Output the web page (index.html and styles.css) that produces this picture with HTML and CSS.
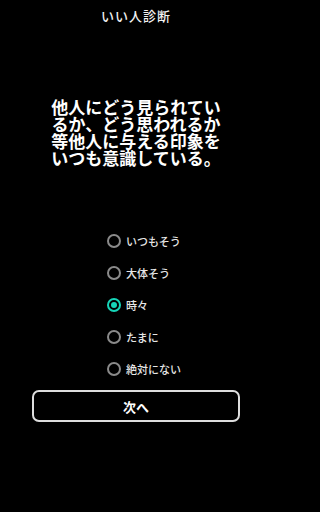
FILE: index.html
```html
<!DOCTYPE html>
<html lang="ja">
<head>
<meta charset="utf-8">
<link rel="stylesheet" href="styles.css">
</head>
<body>
<div class="app">
  <header class="title">いい人診断</header>
  <p class="question">他人にどう見られてい<br>るか、どう思われるか<br>等他人に与える印象を<br>いつも意識している。</p>
  <ul class="options">
    <li class="option"><span class="radio"></span><span class="label">いつもそう</span></li>
    <li class="option"><span class="radio"></span><span class="label">大体そう</span></li>
    <li class="option"><span class="radio checked"></span><span class="label">時々</span></li>
    <li class="option"><span class="radio"></span><span class="label">たまに</span></li>
    <li class="option"><span class="radio"></span><span class="label">絶対にない</span></li>
  </ul>
  <button class="next">次へ</button>
</div>
</body>
</html>
```
FILE: styles.css
```css
html, body {
  margin: 0;
  padding: 0;
  background: #000;
}
body {
  width: 272px;
  height: 512px;
  overflow: hidden;
  font-family: "Noto Sans CJK JP", "Noto Sans", sans-serif;
  color: #fff;
}
.app {
  display: flex;
  flex-direction: column;
}
.title {
  height: 32px;
  line-height: 32px;
  text-align: center;
  font-size: 13px;
  font-weight: 500;
  letter-spacing: 1px;
  color: #f2f2f2;
}
.question {
  margin: 66px 0 0 0;
  font-size: 17px;
  line-height: 17px;
  font-weight: 700;
  text-align: center;
  color: #fff;
}
.options {
  list-style: none;
  margin: 59px 0 0 0;
  padding: 0 0 0 107px;
  display: flex;
  flex-direction: column;
}
.option {
  height: 32px;
  display: flex;
  align-items: center;
  gap: 5px;
}
.radio {
  box-sizing: border-box;
  width: 14px;
  height: 14px;
  border: 2px solid #8a8a8a;
  border-radius: 50%;
  position: relative;
  flex: none;
}
.radio.checked {
  border-color: #16d5b8;
}
.radio.checked::after {
  content: "";
  position: absolute;
  left: 2px;
  top: 2px;
  width: 6px;
  height: 6px;
  border-radius: 50%;
  background: #16d5b8;
}
.label {
  font-size: 11px;
  font-weight: 500;
  color: #e6e6e6;
}
.next {
  margin: 5px 32px 0 32px;
  height: 32px;
  box-sizing: border-box;
  border: 2px solid #dedede;
  border-radius: 7px;
  background: #000;
  color: #fff;
  font-family: "Noto Sans CJK JP", "Noto Sans", sans-serif;
  font-size: 13px;
  font-weight: 700;
  padding: 0;
}
```
